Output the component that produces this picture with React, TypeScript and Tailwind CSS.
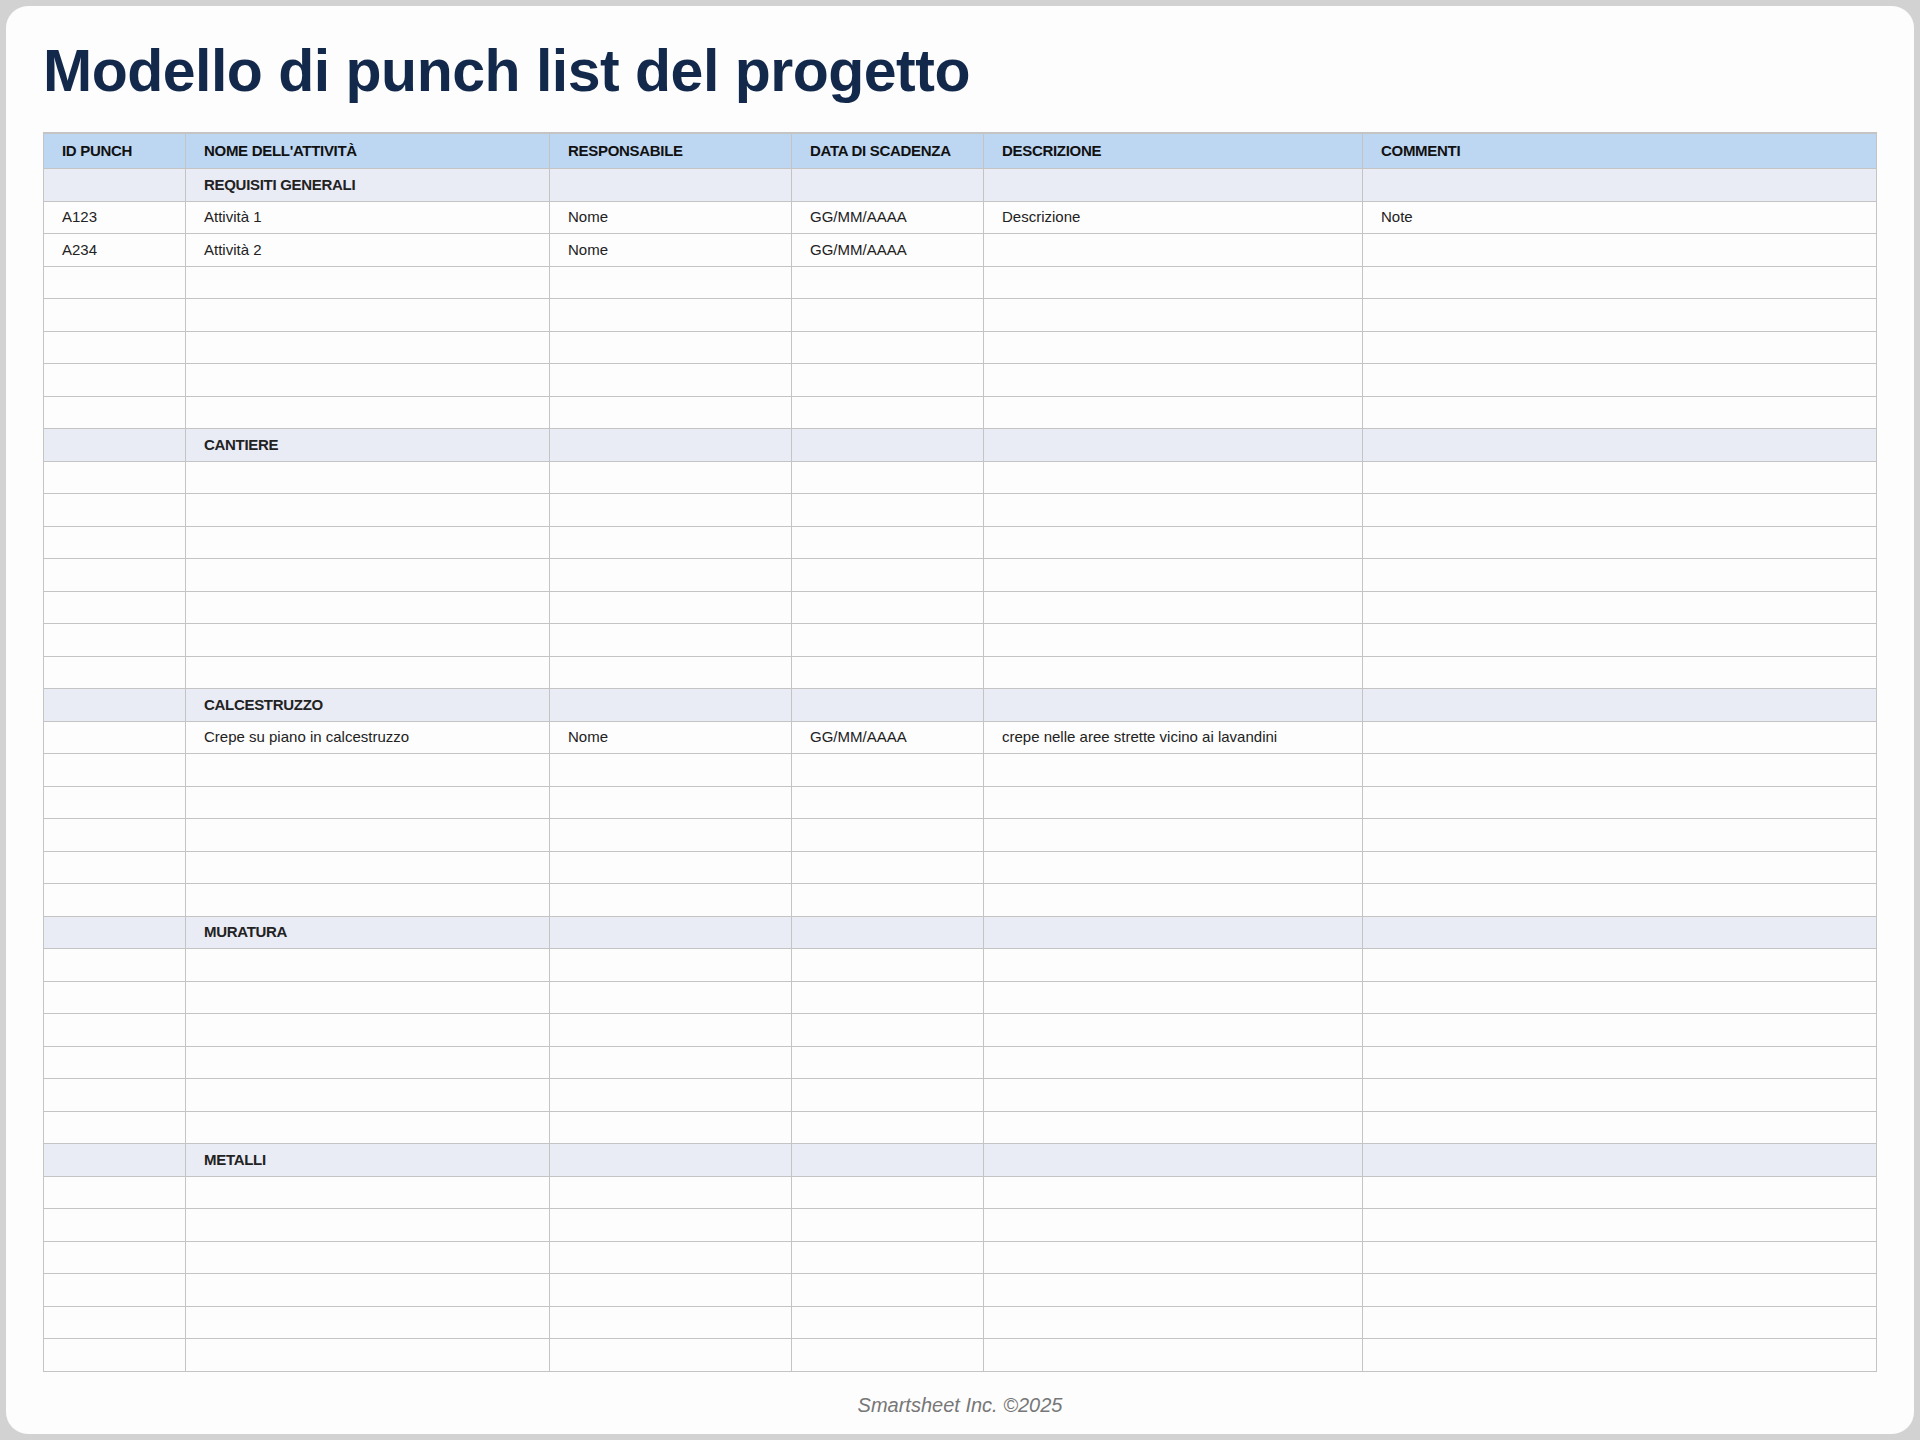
const cols = ["w-[142px]", "w-[364px]", "w-[242px]", "w-[192px]", "w-[379px]", "flex-1"];

type Row = { section?: boolean; cells: string[] };

const empty = (n: number): Row[] => Array.from({ length: n }, () => ({ cells: ["", "", "", "", "", ""] }));

const rows: Row[] = [
  { section: true, cells: ["", "REQUISITI GENERALI", "", "", "", ""] },
  { cells: ["A123", "Attività 1", "Nome", "GG/MM/AAAA", "Descrizione", "Note"] },
  { cells: ["A234", "Attività 2", "Nome", "GG/MM/AAAA", "", ""] },
  ...empty(5),
  { section: true, cells: ["", "CANTIERE", "", "", "", ""] },
  ...empty(7),
  { section: true, cells: ["", "CALCESTRUZZO", "", "", "", ""] },
  { cells: ["", "Crepe su piano in calcestruzzo", "Nome", "GG/MM/AAAA", "crepe nelle aree strette vicino ai lavandini", ""] },
  ...empty(5),
  { section: true, cells: ["", "MURATURA", "", "", "", ""] },
  ...empty(6),
  { section: true, cells: ["", "METALLI", "", "", "", ""] },
  ...empty(6),
];

const headers = ["ID PUNCH", "NOME DELL'ATTIVITÀ", "RESPONSABILE", "DATA DI SCADENZA", "DESCRIZIONE", "COMMENTI"];

export default function App() {
  return (
    <div className="w-[1920px] h-[1440px] bg-[#d2d2d2] p-[6px]" style={{ fontFamily: '"Liberation Sans", Arial, sans-serif' }}>
      <div className="h-full bg-[#fdfdfd] rounded-[22px] px-[37px] flex flex-col">
        <h1 className="pt-[30px] h-[126px] text-[59px] font-bold text-[#13294b] tracking-[-0.5px] leading-[70px]">
          Modello di punch list del progetto
        </h1>
        <div className="border-t-2 border-[#9a9a9a] border-l border-[#c4c4c4]">
          <div className="flex h-[35px] bg-[#bdd6f1] border-b border-[#c4c4c4]">
            {headers.map((h, i) => (
              <div key={i} className={`${cols[i]} border-r border-[#c4c4c4] px-[18px] flex items-center text-[15px] font-bold text-[#111] tracking-[-0.3px]`}>
                {h}
              </div>
            ))}
          </div>
          {rows.map((r, ri) => (
            <div key={ri} className={`flex h-[32.5px] border-b border-[#c4c4c4] ${r.section ? "bg-[#e9ebf5]" : ""}`}>
              {r.cells.map((c, i) => (
                <div
                  key={i}
                  className={`${cols[i]} border-r border-[#c4c4c4] px-[18px] flex items-center text-[15px] text-[#222] ${r.section ? "font-bold tracking-[-0.3px]" : ""}`}
                >
                  {c}
                </div>
              ))}
            </div>
          ))}
        </div>
        <div className="text-center text-[20px] italic text-[#777] mt-[18px]">Smartsheet Inc. ©2025</div>
      </div>
    </div>
  );
}
